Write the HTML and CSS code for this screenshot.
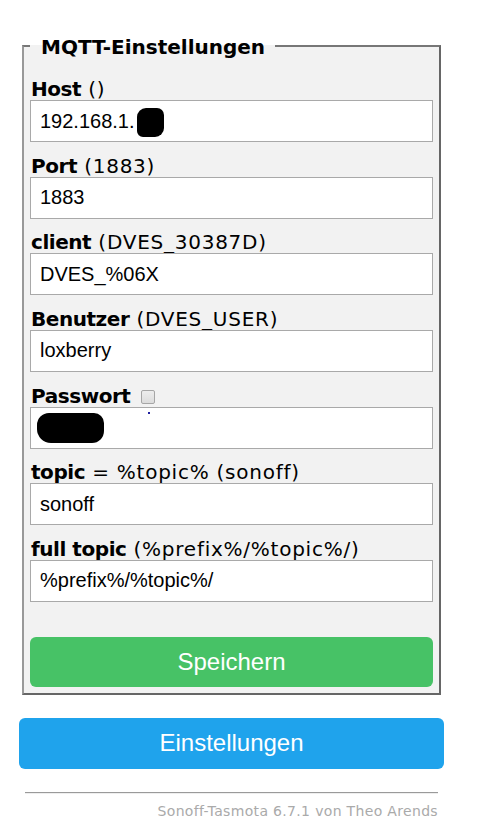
FILE: index.html
```html
<!DOCTYPE html>
<html lang="de">
<head>
<meta charset="utf-8">
<title>MQTT-Einstellungen</title>
<link rel="stylesheet" href="styles.css">
</head>
<body>
<div class="page">
  <form class="form">
    <fieldset class="box">
      <legend class="legend">MQTT-Einstellungen</legend>
      <div class="row">
        <label class="lbl"><b>Host</b> ()</label>
        <div class="field">
          <input class="inp" type="text" value="192.168.1.">
          <span class="redact redact-host"></span>
        </div>
      </div>
      <div class="row">
        <label class="lbl"><b>Port</b> (1883)</label>
        <div class="field"><input class="inp" type="text" value="1883"></div>
      </div>
      <div class="row">
        <label class="lbl"><b>client</b> (DVES_30387D)</label>
        <div class="field"><input class="inp" type="text" value="DVES_%06X"></div>
      </div>
      <div class="row">
        <label class="lbl"><b>Benutzer</b> (DVES_USER)</label>
        <div class="field"><input class="inp" type="text" value="loxberry"></div>
      </div>
      <div class="row">
        <label class="lbl"><b>Passwort</b> <input class="chk" type="checkbox"></label>
        <div class="field">
          <input class="inp" type="text" value="">
          <span class="redact redact-pw"></span>
          <span class="speck"></span>
        </div>
      </div>
      <div class="row">
        <label class="lbl"><b>topic</b> = %topic% (sonoff)</label>
        <div class="field"><input class="inp" type="text" value="sonoff"></div>
      </div>
      <div class="row">
        <label class="lbl"><b>full topic</b> (%prefix%/%topic%/)</label>
        <div class="field"><input class="inp" type="text" value="%prefix%/%topic%/"></div>
      </div>
      <button class="btn btn-green" type="button">Speichern</button>
    </fieldset>
  </form>
  <button class="btn btn-blue" type="button">Einstellungen</button>
  <div class="footer">
    <hr class="rule">
    <span class="credit">Sonoff-Tasmota 6.7.1 von Theo Arends</span>
  </div>
</div>
</body>
</html>
```
FILE: styles.css
```css
html, body {
  margin: 0;
  padding: 0;
  background: #ffffff;
}
body {
  font-family: "DejaVu Sans", Verdana, sans-serif;
  font-size: 20px;
  color: #000;
}
.page {
  width: 425px;
  margin-left: 19px;
  padding-top: 33px;
  display: flex;
  flex-direction: column;
}
.form {
  margin: 0;
}
.box {
  margin: 0 3px;
  padding: 0 6px 6px 6px;
  background: #f2f2f2;
  border-style: solid;
  border-width: 2px;
  border-color: #777777 #666666 #666666 #999999;
  display: flex;
  flex-direction: column;
  min-width: 0;
}
.legend {
  font-weight: bold;
  font-size: 20px;
  letter-spacing: 0;
  line-height: 22px;
  padding: 3px 10px 0 11px;
}
.row {
  display: flex;
  flex-direction: column;
  margin-top: 12.67px;
}
.row:first-of-type {
  margin-top: 20px;
}
.lbl {
  display: block;
  line-height: 22px;
  height: 22px;
  white-space: nowrap;
  padding-left: 1px;
  letter-spacing: 0.75px;
}
.lbl b {
  letter-spacing: -0.45px;
}
.field {
  position: relative;
}
.inp {
  display: block;
  box-sizing: border-box;
  width: 100%;
  height: 42px;
  margin: 0;
  padding: 0 9px;
  border: 1px solid #a9a9a9;
  background: #fff;
  font-family: "Liberation Sans", Arial, sans-serif;
  font-size: 20px;
  letter-spacing: 0;
  color: #000;
  outline: none;
}
.chk {
  -webkit-appearance: none;
  appearance: none;
  width: 14px;
  height: 14px;
  margin: 0 0 0 3px;
  vertical-align: -1px;
  border: 1px solid #a6a6a6;
  border-radius: 2px;
  background: linear-gradient(#ededed, #dcdcdc);
}
.redact {
  position: absolute;
  background: #000;
}
.redact-host {
  left: 107px;
  top: 8px;
  width: 27px;
  height: 29px;
  border-radius: 9px 7px 9px 6px;
}
.redact-pw {
  left: 7px;
  top: 6px;
  width: 67px;
  height: 30px;
  border-radius: 12px 10px 12px 14px;
}
.speck {
  position: absolute;
  left: 118px;
  top: 5px;
  width: 2px;
  height: 2px;
  background: #2020a0;
}
.btn {
  display: block;
  width: 100%;
  height: 50px;
  border: 0;
  border-radius: 6px;
  color: #fff;
  font-family: "Liberation Sans", Arial, sans-serif;
  font-size: 24px;
  padding: 0;
}
.btn-green {
  background: #47c266;
  margin-top: 35px;
}
.btn-blue {
  background: #1fa3ec;
  margin-top: 23px;
  height: 51px;
}
.footer {
  display: flex;
  flex-direction: column;
  align-items: flex-end;
  padding: 0 6px;
}
.rule {
  align-self: stretch;
  margin: 23px 0 0 0;
  height: 0;
  border: 0;
  border-top: 1px solid #9a9a9a;
  border-bottom: 1px solid #eeeeee;
}
.credit {
  margin-top: 8px;
  font-size: 14px;
  letter-spacing: 0.33px;
  line-height: 18px;
  color: #aaaaaa;
}
```
